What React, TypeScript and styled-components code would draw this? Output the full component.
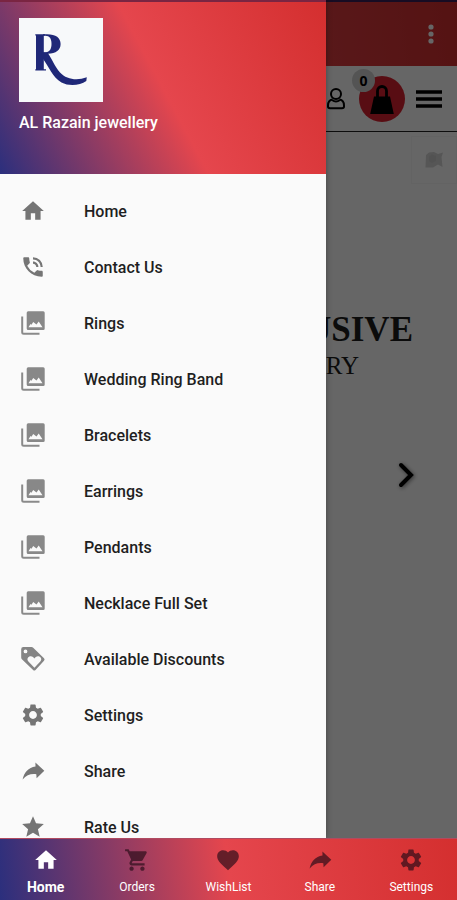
import React from "react";
import styled, { createGlobalStyle } from "styled-components";
import {
  MdFavorite,
  MdHome,
  MdPhoneInTalk,
  MdSettings,
  MdShoppingCart,
  MdStar,
} from "react-icons/md";

const GlobalStyle = createGlobalStyle`
  * { box-sizing: border-box; }
  body { margin: 0; background: #666; font-family: Roboto, "Liberation Sans", sans-serif; }
  button { font: inherit; border: 0; padding: 0; background: none; color: inherit; cursor: pointer; }
  a { color: inherit; text-decoration: none; }
  svg { display: block; flex: none; }
`;

const brandStops = "#2b2f7d, #e5464d 50%, #d42f2f";

const Screen = styled.div`
  display: flex;
  flex-direction: column;
  height: 100vh;
  overflow: hidden;
`;

const Stage = styled.div`
  position: relative;
  flex: 1;
  min-height: 0;
  overflow: hidden;
`;

const Page = styled.div`
  display: flex;
  flex-direction: column;
  height: 100%;
  background: #fff;
`;

const AppBar = styled.header`
  display: flex;
  align-items: center;
  justify-content: flex-end;
  height: 66px;
  padding-right: 12px;
  border-top: 2px solid #3b2058;
  background: linear-gradient(82deg, ${brandStops});
  color: #fff;
`;

const ShopBar = styled.div`
  display: flex;
  align-items: center;
  justify-content: flex-end;
  height: 66px;
  padding-right: 15px;
  border-bottom: 1px solid #222;
  color: #000;
`;

const CartButton = styled.button`
  position: relative;
  display: grid;
  place-items: center;
  width: 46px;
  height: 46px;
  margin: 0 11px 0 13px;
  border-radius: 50%;
  background: #dd2230;
`;

const CartCount = styled.span`
  position: absolute;
  top: -7px;
  left: -7px;
  width: 23px;
  height: 23px;
  border-radius: 50%;
  background: #d2d2d2;
  font: 700 14px/23px "Open Sans", sans-serif;
  text-align: center;
`;

const Hero = styled.section`
  display: flex;
  flex-direction: column;
  flex: 1;
`;

const Thumb = styled.div`
  display: grid;
  place-items: center;
  align-self: flex-end;
  width: 46px;
  height: 48px;
  margin-top: 4px;
  border: 1px solid #f7f7f7;
  color: #c8c8c8;
`;

const HeroText = styled.div`
  padding-right: 44px;
  margin-top: 128px;
  color: #1c1c1c;
  font-family: "Liberation Serif", serif;
  text-align: right;
`;

const HeroTitle = styled.h1`
  margin: 0;
  font-size: 35px;
  line-height: 36px;
`;

const HeroSub = styled.p`
  margin: 0 54px 0 0;
  font-size: 25px;
  line-height: 36px;
`;

const NextButton = styled.button`
  align-self: flex-end;
  margin: 77px 42px 0 0;
  filter: drop-shadow(1px 1px 2px #777);
`;

const Scrim = styled.div`
  position: absolute;
  inset: 0;
  background: rgba(0, 0, 0, 0.6);
`;

const Drawer = styled.aside`
  position: absolute;
  top: 0;
  bottom: 0;
  left: 0;
  width: 71.4%;
  overflow: hidden;
  background: #fafafa;
  box-shadow: 0 0 6px rgba(0, 0, 0, 0.35);
`;

const DrawerHeader = styled.div`
  height: 174px;
  padding: 16px 19px;
  border-top: 2px solid #7a2542;
  background: linear-gradient(62deg, ${brandStops});
  color: #fff;
`;

const LogoTile = styled.div`
  width: 84px;
  height: 84px;
  background: #f7f9fa;
`;

const ShopName = styled.div`
  margin-top: 11px;
  font-size: 16px;
  font-weight: 500;
  line-height: 20px;
`;

const Menu = styled.nav`
  display: flex;
  flex-direction: column;
  padding-top: 9px;
`;

const MenuItem = styled.a`
  display: flex;
  align-items: center;
  gap: 38px;
  height: 56px;
  padding-left: 20px;
  color: #1f1f1f;
  font-size: 16px;
  font-weight: 500;

  svg { color: #757575; }
`;

const BottomNav = styled.nav`
  display: grid;
  grid-template-columns: repeat(5, 1fr);
  height: 62px;
  border-top: 1px solid #b04a60;
  background: linear-gradient(82deg, ${brandStops});
`;

const Tab = styled.a<{ $active?: boolean }>`
  display: flex;
  flex-direction: column;
  align-items: center;
  gap: 5px;
  padding-top: 8px;
  color: #fff;
  font-size: ${(p) => (p.$active ? 14 : 12)}px;
  font-weight: ${(p) => (p.$active ? 700 : 400)};
  line-height: 18px;

  svg { color: ${(p) => (p.$active ? "#fff" : "rgba(40, 12, 24, 0.68)")}; }
`;

type IconProps = { size?: number };

const Gallery = ({ size = 26 }: IconProps) => (
  <svg width={size} height={size} viewBox="0 0 26 26" fill="none">
    <path d="M2.200 6.500V22.200a1.500 1.500 0 0 0 1.500 1.500H19.500" stroke="#8a8a8a" strokeWidth="2" />
    <path
      fill="#888"
      fillRule="evenodd"
      d="M8.200 1.200H23.200a1.500 1.500 0 0 1 1.500 1.500V18.500a1.500 1.500 0 0 1-1.500 1.500H8.200a1.500 1.500 0 0 1-1.500-1.500V2.700A1.500 1.500 0 0 1 8.200 1.200ZM8.500 17.300H22.500L18.700 11.400l-2.200 3.200-3.300-2.700-1.700 2.900-1-.9Z"
    />
  </svg>
);

const TagHeart = ({ size = 26 }: IconProps) => (
  <svg width={size} height={size} viewBox="0 0 26 26">
    <path
      fill="#858585"
      fillRule="evenodd"
      d="M3.300 1H11.500Q12.500 1 13.200 1.700L24 12.300Q25.200 13.500 24 14.700L15.500 24Q14.300 25.200 13.100 24L1.900 13.200Q1.200 12.500 1.200 11.500V3.200Q1.200 1 3.300 1ZM5.500 3.500a1.900 1.900 0 1 0 0 3.800 1.900 1.900 0 0 0 0-3.800ZM14.400 21.800 20.300 15.500C22.500 12.900 20.500 10.200 18 10.200 16.300 10.200 15.100 11.200 14.400 12.500 13.700 11.200 12.500 10.200 10.800 10.200 8.200 10.200 6.300 12.900 8.400 15.500Z"
    />
  </svg>
);

const ShareArrow = ({ size = 26 }: IconProps) => (
  <svg width={size} height={size} viewBox="0 0 26 26" fill="currentColor">
    <path d="M15.400 4.600 24.300 12.700 16.600 20.300 16.300 16.200C10.500 15.600 6.500 17 2.600 21.500 4.200 14.500 8.300 9.500 15.500 8.600Z" />
  </svg>
);

const Logo = () => (
  <svg width="84" height="84" viewBox="0 0 84 84" role="img" aria-label="AL Razain logo">
    <g fill="#1f2878">
      <path d="M16.300 16.300H26V17.500H24.800V51.300H27V52.500H16.300V51.300H17V17.500H16.300Z" />
      <path d="M24 16.300H28C37 16.300 41.600 20 41.600 26 41.600 32 37 35.700 29 35.700H24V34.200H27C30.500 34 32.500 31 32.500 26 32.500 20.500 30.500 17.800 26.500 17.700H24Z" />
      <path d="M22.500 34.500H28.500C32.500 40 36 49 41 54.500 47.500 61.500 58 63 67.800 59.300L67.300 63C61 67.500 50 68.500 42.500 64.500 33.500 59.500 30 48.500 23 39.500Z" />
    </g>
  </svg>
);

const DotsIcon = () => (
  <svg width="28" height="28" viewBox="0 0 28 28" fill="#fff">
    <circle cx="14" cy="7" r="2.600" />
    <circle cx="14" cy="14" r="2.600" />
    <circle cx="14" cy="21" r="2.600" />
  </svg>
);

const UserIcon = () => (
  <svg width="20" height="24" viewBox="0 0 20 24" fill="none" stroke="#000" strokeWidth="2">
    <circle cx="10" cy="7" r="5" />
    <path d="M6.500 12.500C3.500 13 2 15.500 2 18.500V19.500Q2 21.300 4 21.300H16Q18 21.300 18 19.500V18.500C18 15.500 16.500 13 13.500 12.500" />
    <path d="M6 13Q10 15.800 14 13" />
  </svg>
);

const BagIcon = () => (
  <svg width="26" height="32" viewBox="0 0 26 32">
    <path d="M8.500 14V8a4.500 4.500 0 0 1 9 0V14" fill="none" stroke="#000" strokeWidth="2.800" />
    <path d="M5 13.500H21L24.800 31H1.200Z" />
  </svg>
);

const BurgerIcon = () => (
  <svg width="26" height="20" viewBox="0 0 26 20" stroke="#000" strokeWidth="3.600">
    <path d="M0 3H26M0 10H26M0 17H26" />
  </svg>
);

const ThumbIcon = () => (
  <svg width="20" height="18" viewBox="0 0 20 18" fill="currentColor">
    <path d="M2 4 5 1.500 10 1 14 3 19 1.500 17.500 6 18.500 16 14 13.500 9 16.500H1.500Z" opacity=".75" />
    <path d="M5 5.500 8 3.500 12 5V10L8 12 5 10Z" opacity=".6" />
  </svg>
);

const NextIcon = () => (
  <svg width="18" height="28" viewBox="0 0 18 28" fill="none" stroke="#000" strokeWidth="4" strokeLinecap="round">
    <path d="M4 4 14 14 4 24" />
  </svg>
);

const menu = [
  { label: "Home", Icon: MdHome },
  { label: "Contact Us", Icon: MdPhoneInTalk },
  { label: "Rings", Icon: Gallery },
  { label: "Wedding Ring Band", Icon: Gallery },
  { label: "Bracelets", Icon: Gallery },
  { label: "Earrings", Icon: Gallery },
  { label: "Pendants", Icon: Gallery },
  { label: "Necklace Full Set", Icon: Gallery },
  { label: "Available Discounts", Icon: TagHeart },
  { label: "Settings", Icon: MdSettings },
  { label: "Share", Icon: ShareArrow },
  { label: "Rate Us", Icon: MdStar },
];

const tabs = [
  { label: "Home", Icon: MdHome, active: true },
  { label: "Orders", Icon: MdShoppingCart },
  { label: "WishList", Icon: MdFavorite },
  { label: "Share", Icon: ShareArrow },
  { label: "Settings", Icon: MdSettings },
];

export default function App() {
  return (
    <>
      <GlobalStyle />
      <Screen>
        <Stage>
          <Page>
            <AppBar>
              <button aria-label="More options"><DotsIcon /></button>
            </AppBar>
            <ShopBar>
              <button aria-label="Account"><UserIcon /></button>
              <CartButton aria-label="Cart">
                <BagIcon />
                <CartCount>0</CartCount>
              </CartButton>
              <button aria-label="Site menu"><BurgerIcon /></button>
            </ShopBar>
            <Hero>
              <Thumb><ThumbIcon /></Thumb>
              <HeroText>
                <HeroTitle>EXCLUSIVE</HeroTitle>
                <HeroSub>JEWELLERY</HeroSub>
              </HeroText>
              <NextButton aria-label="Next slide"><NextIcon /></NextButton>
            </Hero>
          </Page>
          <Scrim />
          <Drawer>
            <DrawerHeader>
              <LogoTile><Logo /></LogoTile>
              <ShopName>AL Razain jewellery</ShopName>
            </DrawerHeader>
            <Menu aria-label="Main menu">
              {menu.map(({ label, Icon }) => (
                <MenuItem key={label} href="#">
                  <Icon size={26} />
                  {label}
                </MenuItem>
              ))}
            </Menu>
          </Drawer>
        </Stage>
        <BottomNav aria-label="Tabs">
          {tabs.map(({ label, Icon, active }) => (
            <Tab key={label} href="#" $active={active}>
              <Icon size={26} />
              {label}
            </Tab>
          ))}
        </BottomNav>
      </Screen>
    </>
  );
}
